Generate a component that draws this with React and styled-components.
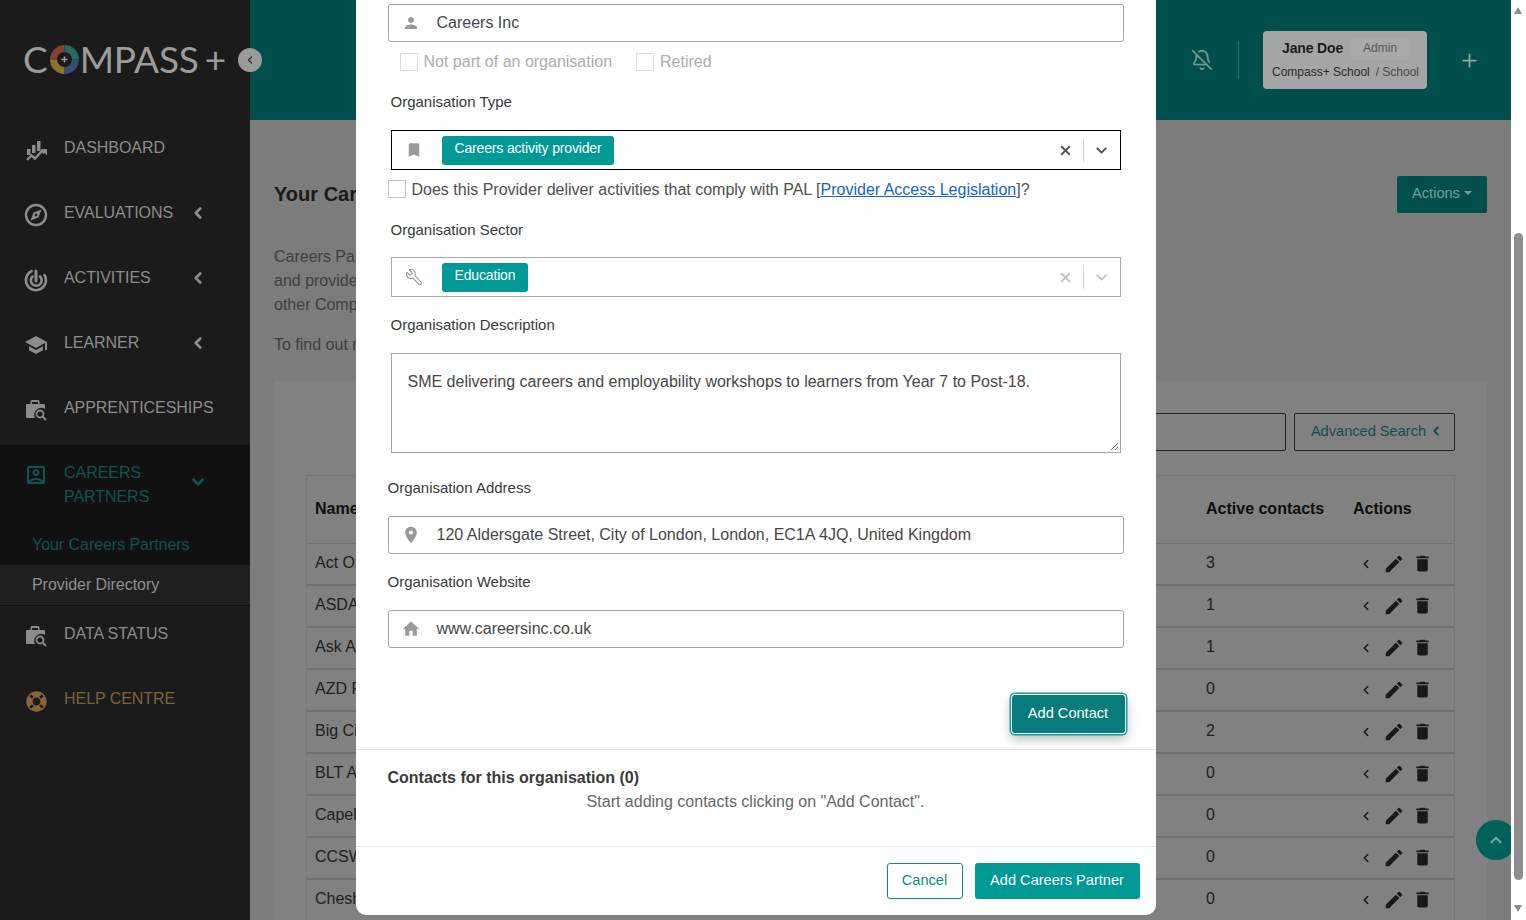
import React from "react";
import styled, { createGlobalStyle } from "styled-components";
import { MdPerson, MdBookmark, MdLocationOn, MdHome, MdEdit, MdDelete, MdSchool, MdOutlineAccountBox } from "react-icons/md";
import { FaLifeRing } from "react-icons/fa";
import { ChevronLeft, ChevronDown, ChevronUp, X, BellOff, Plus, Wrench } from "lucide-react";

const Global = createGlobalStyle`
  html, body { margin: 0; padding: 0; height: 100%; overflow: hidden; background: #fff; }
  body { font-family: "Liberation Sans", Arial, sans-serif; font-size: 16px; }
  * { box-sizing: border-box; }
  #root { height: 100%; }
`;

const Screen = styled.div`display: flex; width: 1526px; height: 920px; overflow: hidden;`;
const Frame = styled.div`position: relative; display: flex; width: 1511px; height: 920px; overflow: hidden;`;

/* Sidebar */
const Sidebar = styled.aside`width: 250px; flex: none; background: #1b1b1b; display: flex; flex-direction: column;`;
const LogoBar = styled.div`height: 115px; padding: 39px 0 0 23px; display: flex; align-items: flex-start;`;
const LogoText = styled.span`font-family: Lato, sans-serif; font-size: 37px; line-height: 40px; letter-spacing: ${p => p.$ls || "-0.2px"}; color: #9b9b9b; font-weight: 400;`;
const LogoRing = styled.svg`width: 29px; height: 29px; margin: 6px 1px 0 2px; flex: none;`;
const LogoPlus = styled(LogoText)`margin-left: 6px;`;
const NavItem = styled.div`
  height: 65px; display: flex; align-items: flex-start;
  padding: 21px 0 0 24px;
  margin-top: ${p => (p.$tight ? "-5px" : "0")};
  color: ${p => p.$color || "#8c8c8c"};
`;
const NavIcon = styled.span`width: 24px; height: 24px; margin: 2px 16px 0 0; display: flex; align-items: center; justify-content: center; flex: none; color: ${p => p.$color || "#8c8c8c"};`;
const NavLabel = styled.span`font-size: 16px; line-height: 24px; letter-spacing: -0.05px; width: 125px; white-space: pre-line; flex: none;`;
const NavChevron = styled.span`margin: ${p => p.$mt || "3px"} 0 0 0; display: flex; color: ${p => p.$color || "#8c8c8c"};`;
const NavGroup = styled.div`margin-top: 5px; background: #111;`;
const GroupHead = styled.div`height: 78px; padding: 16px 0 0 24px; display: flex; align-items: flex-start; color: #0f5352;`;
const SubActive = styled.div`height: 42px; padding: 10px 0 0 32px; font-size: 16px; line-height: 24px; color: #0f5352; letter-spacing: -0.05px;`;
const SubItem = styled.div`height: 41px; padding: 8px 0 0 32px; font-size: 16px; line-height: 24px; color: #8e8e8e; background: #1f1f1f; border-bottom: 1px solid #0d0d0d; letter-spacing: -0.05px;`;

/* Main page */
const Main = styled.main`flex: 1; background: #7c7c7c; display: flex; flex-direction: column; min-width: 0;`;
const Header = styled.header`height: 120px; flex: none; background: #004f4c; display: flex; align-items: center; justify-content: flex-end; padding-right: 31px;`;
const HeaderIcon = styled.span`display: flex; color: #6d9391;`;
const HeaderRule = styled.span`width: 1px; height: 38px; background: #2f6d6a; margin: 0 24px 0 25px;`;
const UserCard = styled.div`width: 164px; height: 58px; background: #a5a5a5; border-radius: 4px; padding: 6px 8px 0 9px; color: #222; margin-right: 32px;`;
const UserTop = styled.div`display: flex; align-items: center; padding-left: 10px; height: 23px;`;
const UserName = styled.span`font-size: 14px; font-weight: 700; color: #1c1c1c; letter-spacing: -0.15px; padding-bottom: 1px;`;
const UserBadge = styled.span`margin-left: 8px; width: 58px; height: 23px; background: #a9a9a9; border-radius: 3px; font-size: 12px; line-height: 23px; text-align: center; color: #555;`;
const UserBottom = styled.div`display: flex; justify-content: space-between; font-size: 12px; line-height: 16px; margin-top: 4px; color: #2b2b2b;`;
const UserRole = styled.span`color: #484848;`;

const Content = styled.div`flex: 1; padding: 56px 24px 0; min-height: 0; display: flex; flex-direction: column;`;
const TitleRow = styled.div`display: flex; justify-content: space-between; align-items: flex-start; height: 37px;`;
const Title = styled.h1`margin: 6px 0 0; font-size: 20px; line-height: 24px; font-weight: 700; color: #1a1a1a;`;
const ActionsBtn = styled.button`width: 90px; height: 37px; border: 0; border-radius: 2px; background: #004f4c; color: #6f9f9d; font: 14.6px "Liberation Sans", sans-serif; display: flex; align-items: center; justify-content: center; gap: 4px; padding: 0 0 3px;`;
const Caret = styled.span`width: 0; height: 0; border: 4px solid transparent; border-top-color: #6f9f9d; border-bottom: 0;`;
const Para = styled.p`margin: ${p => p.$mt} 0 0; font-size: 16px; line-height: 24px; color: #3f3f3f; white-space: pre-line; width: 600px;`;
const Card = styled.section`margin-top: 24px; flex: 1; background: #818181; padding: 32px 32px 0;`;
const SearchRow = styled.div`display: flex; justify-content: flex-end; gap: 8px;`;
const SearchInput = styled.div`width: 800px; height: 38px; border: 1px solid #232323; border-radius: 2px;`;
const AdvBtn = styled.button`width: 161px; height: 38px; border: 1px solid #232323; border-radius: 2px; background: transparent; color: #124f4f; font: 14.6px "Liberation Sans", sans-serif; display: flex; align-items: center; justify-content: center; gap: 3px; padding: 0 0 2px 5px;`;
const Table = styled.div`margin-top: 24px; border: 1px solid #767676; border-bottom: 0;`;
const Row = styled.div`
  display: grid; grid-template-columns: 891px 147px 1fr; align-items: center;
  height: ${p => (p.$head ? "68px" : "42px")};
  padding-left: 8px; border-bottom: 2px solid #6f6f6f; color: #202020;
  ${p => p.$head && "font-weight: 700; color: #0e0e0e; border-bottom: 1px solid #727272; padding-bottom: 2px;"}
`;
const Cell = styled.div`padding-bottom: ${p => (p.$head ? "0" : "3px")}; white-space: nowrap; overflow: hidden;`;
const RowActions = styled.div`display: flex; align-items: center; gap: 7px; padding: 0 0 1px 7px; margin-left: -1px; color: #191919;`;
const RowChevron = styled.span`display: flex; margin-right: 3px;`;
const BackTop = styled.div`position: absolute; left: 1476px; top: 820px; width: 40px; height: 40px; border-radius: 50%; background: #00605c; color: #6fa3a1; display: flex; align-items: center; justify-content: center;`;
const Toggle = styled.div`position: absolute; left: 238px; top: 48px; width: 24px; height: 24px; border-radius: 50%; background: #9a9a9a; color: #333; display: flex; align-items: center; justify-content: center;`;

/* Modal */
const Overlay = styled.div`position: absolute; inset: 0; display: flex; justify-content: center; align-items: flex-start;`;
const Modal = styled.div`width: 800px; height: 915px; background: #fff; border-radius: 0 0 10px 10px; display: flex; flex-direction: column;`;
const Form = styled.div`padding: 4px 32px 0;`;
const InputBox = styled.div`height: 38px; margin-top: ${p => p.$mt || 0}; border: 1px solid #a6a6a6; border-radius: 3px; display: flex; align-items: center; color: #474747;`;
const FieldIcon = styled.span`width: 47px; margin-right: 1px; flex: none; display: flex; justify-content: center; color: #9a9a9a; padding-right: 3px;`;
const CheckRow = styled.div`margin-top: 10px; padding-left: 12px; display: flex; align-items: center; height: 19px; color: #adadad;`;
const CheckBox = styled.span`width: 18px; height: 18px; flex: none; border: 1px solid ${p => p.$c || "#dcdcdc"}; margin-right: ${p => p.$mr || "6px"}; margin-left: ${p => p.$ml || 0};`;
const Label = styled.div`margin-top: ${p => p.$mt}; padding-left: ${p => (p.$flush ? "0" : "3px")}; font-size: 15px; line-height: 20px; color: #3a3a3a;`;
const SelectBox = styled.div`
  margin: ${p => p.$mt} 3px 0; height: 40px; display: flex; align-items: center;
  border: 1px solid ${p => (p.$focus ? "#000" : "#a9a9a9")};
`;
const SelectIcon = styled(FieldIcon)`width: 44px; margin: 0; padding: 0; flex: none;`;
const Chip = styled.span`margin-left: 6px; height: 29px; padding: 0 13px 4px; background: #009a96; border-radius: 3px; color: #fff; font-size: 14px; letter-spacing: -0.16px; display: flex; align-items: center;`;
const SelectTools = styled.div`margin-left: auto; display: flex; align-items: center; color: ${p => p.$c}; padding-right: 10px;`;
const ToolRule = styled.span`width: 1px; height: 24px; background: #d4d4d4; margin: 0 9px 0 10px;`;
const PalRow = styled.div`margin-top: 10px; height: 18px; display: flex; align-items: center; color: #4f4f4f; line-height: 20px;`;
const PalText = styled.span`padding-top: 1px; white-space: nowrap;`;
const Link = styled.a`color: #1268c4; text-decoration: underline;`;
const TextArea = styled.div`margin: 18px 3px 0; height: 100px; border: 1px solid #a6a6a6; padding: 16px 15px 0 16px; line-height: 24px; color: #474747; position: relative;`;
const Resize = styled.svg`position: absolute; right: 1px; bottom: 1px; width: 10px; height: 10px;`;
const AddRow = styled.div`margin-top: 47px; display: flex; justify-content: flex-end;`;
const AddBtn = styled.button`
  width: 113px; height: 38px; margin-right: -1px; border: 0; border-radius: 3px; background: #067c7b; color: #fff;
  font: 14.6px "Liberation Sans", sans-serif; padding: 0 0 3px;
  box-shadow: 0 0 0 1px #fff, 0 0 0 2.5px #1d9b9b, 0 5px 12px 1px rgba(0,0,0,.28);
`;
const Section = styled.div`margin-top: 16px; border-top: 1px solid #e3e3e3; padding: 18px 32px 34px;`;
const SectionTitle = styled.div`font-weight: 700; line-height: 20px; color: #3a3a3a;`;
const SectionNote = styled.div`margin-top: 4px; line-height: 20px; text-align: center; color: #666;`;
const Footer = styled.div`border-top: 1px solid #e3e3e3; padding: 16px; display: flex; justify-content: flex-end; gap: 12px;`;
const Cancel = styled.button`width: 76px; height: 36px; border: 1px solid #0a8d8a; border-radius: 3px; background: #fff; color: #0a8d8a; font: 14.6px "Liberation Sans", sans-serif; padding: 0 0 3px;`;
const Primary = styled.button`width: 165px; height: 36px; border: 0; border-radius: 3px; background: #009a96; color: #fff; font: 14.6px "Liberation Sans", sans-serif; padding: 0 0 3px;`;

/* Native scrollbar look */
const ScrollBar = styled.div`width: 15px; flex: none; background: #fff; position: relative; display: flex; flex-direction: column; align-items: center;`;
const Thumb = styled.div`margin: 219px 0 0 -1px; width: 9px; height: 647px; border-radius: 5px; background: #8f8f8f;`;
const Arrow = styled.span`
  width: 0; height: 0; margin: ${p => p.$m}; margin-left: -1px; border-left: 4.5px solid transparent; border-right: 4.5px solid transparent;
  ${p => (p.$up ? "border-bottom: 7px solid #8a8a8a;" : "border-top: 7px solid #8a8a8a;")}
`;

const DashIcon = () => (
  <svg width="24" height="24" viewBox="0 0 24 24" fill="currentColor">
    <rect x="3" y="11" width="3.500" height="6" /><rect x="8" y="7" width="3.500" height="8" /><rect x="13" y="3" width="3.500" height="10" />
    <path d="M3 22l4.500-4.500 3.500 3 7-7.500 2.500 2" fill="none" stroke="currentColor" strokeWidth="2.400" />
    <path d="M23 17.500V11h-6z" />
  </svg>
);
const CompassIcon = () => (
  <svg width="24" height="24" viewBox="0 0 24 24" fill="none" stroke="currentColor">
    <circle cx="12" cy="12" r="10" strokeWidth="2.400" />
    <path d="M17.500 6.500L14.500 14.500 6.500 17.500 9.500 9.500z" fill="currentColor" stroke="none" />
    <circle cx="12" cy="12" r="1.300" fill="#1b1b1b" stroke="none" />
  </svg>
);
const RadarIcon = () => (
  <svg width="24" height="24" viewBox="0 0 24 24" fill="none" stroke="currentColor" strokeWidth="2.600" strokeLinecap="round">
    <path d="M7.500 3.200A10 10 0 1 0 20.500 7" /><path d="M8.500 8.500a5.400 5.400 0 1 0 7.500 0" /><path d="M12 3v10" strokeWidth="3" />
  </svg>
);
const CaseSearch = () => (
  <svg width="24" height="24" viewBox="0 0 24 24" fill="currentColor">
    <path d="M8 2h6a1.500 1.500 0 0 1 1.500 1.500V6H20a1 1 0 0 1 1 1v4a7 7 0 0 0-10 9H3a1 1 0 0 1-1-1V7a1 1 0 0 1 1-1h3.500V3.500A1.500 1.500 0 0 1 8 2zm0 2v2h6V4z" fillRule="evenodd" />
    <circle cx="16" cy="16" r="3.500" fill="none" stroke="currentColor" strokeWidth="1.800" />
    <path d="M18.500 18.500l3.500 3.500" stroke="currentColor" strokeWidth="2" />
  </svg>
);
const Ring = () => (
  <LogoRing viewBox="0 0 28 28">
    <g fill="none" strokeWidth="7">
      <path d="M14 3.500A10.500 10.500 0 0 0 3.500 14" stroke="#84403a" />
      <path d="M3.500 14A10.500 10.500 0 0 0 14 24.500" stroke="#8a742e" />
      <path d="M14 24.500A10.500 10.500 0 0 0 24.500 14" stroke="#324f76" />
      <path d="M24.500 14A10.500 10.500 0 0 0 14 3.500" stroke="#256b64" />
    </g>
    <circle cx="14" cy="14" r="7" fill="#1b1b1b" />
    <path d="M14 11v6M11 14h6" stroke="#9b9b9b" strokeWidth="1.500" />
  </LogoRing>
);

const chev = <ChevronLeft size={18} strokeWidth={3.6} />;
const rows = [["Act On It", 3], ["ASDA", 1], ["Ask Apprenticeships", 1], ["AZD Partnership", 0], ["Big City", 2], ["BLT Academy", 0], ["Capel Manor", 0], ["CCSW Trust", 0], ["Cheshire Careers", 0]];

export default function App() {
  return (
    <Screen>
      <Global />
      <Frame>
        <Sidebar>
          <LogoBar>
            <LogoText $ls="0">C</LogoText>
            <Ring />
            <LogoText>MPASS</LogoText>
            <LogoPlus>+</LogoPlus>
          </LogoBar>
          <NavItem><NavIcon><DashIcon /></NavIcon><NavLabel>DASHBOARD</NavLabel></NavItem>
          <NavItem><NavIcon><CompassIcon /></NavIcon><NavLabel>EVALUATIONS</NavLabel><NavChevron>{chev}</NavChevron></NavItem>
          <NavItem><NavIcon><RadarIcon /></NavIcon><NavLabel>ACTIVITIES</NavLabel><NavChevron>{chev}</NavChevron></NavItem>
          <NavItem><NavIcon><MdSchool size={26} /></NavIcon><NavLabel>LEARNER</NavLabel><NavChevron>{chev}</NavChevron></NavItem>
          <NavItem><NavIcon><CaseSearch /></NavIcon><NavLabel>APPRENTICESHIPS</NavLabel></NavItem>
          <NavGroup>
            <GroupHead>
              <NavIcon $color="#0f5352"><MdOutlineAccountBox size={24} /></NavIcon>
              <NavLabel>{"CAREERS\nPARTNERS"}</NavLabel>
              <NavChevron $color="#0f5352" $mt="12px"><ChevronDown size={18} strokeWidth={3.6} /></NavChevron>
            </GroupHead>
            <SubActive>Your Careers Partners</SubActive>
            <SubItem>Provider Directory</SubItem>
          </NavGroup>
          <NavItem $tight><NavIcon><CaseSearch /></NavIcon><NavLabel>DATA STATUS</NavLabel></NavItem>
          <NavItem $color="#7d6238"><NavIcon $color="#87653a"><FaLifeRing size={21} /></NavIcon><NavLabel>HELP CENTRE</NavLabel></NavItem>
        </Sidebar>
        <Main>
          <Header>
            <HeaderIcon><BellOff size={22} strokeWidth={2} /></HeaderIcon>
            <HeaderRule />
            <UserCard>
              <UserTop><UserName>Jane Doe</UserName><UserBadge>Admin</UserBadge></UserTop>
              <UserBottom><span>Compass+ School</span><UserRole>/ School</UserRole></UserBottom>
            </UserCard>
            <HeaderIcon><Plus size={21} strokeWidth={2} color="#8fa9a8" /></HeaderIcon>
          </Header>
          <Content>
            <TitleRow><Title>Your Careers Partners</Title><ActionsBtn>Actions <Caret /></ActionsBtn></TitleRow>
            <Para $mt="32px">{"Careers Partners are employers\nand providers you work with,\nother Compass+ schools"}</Para>
            <Para $mt="16px">To find out more</Para>
            <Card>
              <SearchRow><SearchInput /><AdvBtn>Advanced Search <ChevronLeft size={14} strokeWidth={3.2} /></AdvBtn></SearchRow>
              <Table>
                <Row $head><Cell $head>Name</Cell><Cell $head>Active contacts</Cell><Cell $head>Actions</Cell></Row>
                {rows.map(([name, n]) => (
                  <Row key={name}>
                    <Cell>{name}</Cell><Cell>{n}</Cell>
                    <RowActions><RowChevron><ChevronLeft size={14} strokeWidth={2.6} /></RowChevron><MdEdit size={22} /><MdDelete size={21} /></RowActions>
                  </Row>
                ))}
              </Table>
            </Card>
          </Content>
        </Main>
        <Toggle><ChevronLeft size={12} strokeWidth={3} /></Toggle>
        <BackTop><ChevronUp size={18} strokeWidth={3} /></BackTop>
        <Overlay>
          <Modal>
            <Form>
              <InputBox><FieldIcon><MdPerson size={18} /></FieldIcon>Careers Inc</InputBox>
              <CheckRow><CheckBox />Not part of an organisation<CheckBox $ml="24px" $mr="6px" />Retired</CheckRow>
              <Label $mt="21px">Organisation Type</Label>
              <SelectBox $focus $mt="18px">
                <SelectIcon><MdBookmark size={18} /></SelectIcon>
                <Chip>Careers activity provider</Chip>
                <SelectTools $c="#555"><X size={15} strokeWidth={3.2} /><ToolRule /><ChevronDown size={17} strokeWidth={2.8} /></SelectTools>
              </SelectBox>
              <PalRow><CheckBox $c="#c4c4c4" /><PalText>Does this Provider deliver activities that comply with PAL [<Link>Provider Access Legislation</Link>]?</PalText></PalRow>
              <Label $mt="22px">Organisation Sector</Label>
              <SelectBox $mt="17px">
                <SelectIcon><Wrench size={18} strokeWidth={1.5} style={{ transform: "scaleX(-1)" }} /></SelectIcon>
                <Chip>Education</Chip>
                <SelectTools $c="#c2c2c2"><X size={15} strokeWidth={3.2} /><ToolRule /><ChevronDown size={17} strokeWidth={2.8} /></SelectTools>
              </SelectBox>
              <Label $mt="18px">Organisation Description</Label>
              <TextArea>
                SME delivering careers and employability workshops to learners from Year 7 to Post-18.
                <Resize viewBox="0 0 10 10"><path d="M9 2L2 9M9 6L6 9" stroke="#777" strokeWidth="1" /></Resize>
              </TextArea>
              <Label $flush $mt="25px">Organisation Address</Label>
              <InputBox $mt="18px"><FieldIcon><MdLocationOn size={20} /></FieldIcon>120 Aldersgate Street, City of London, London, EC1A 4JQ, United Kingdom</InputBox>
              <Label $flush $mt="18px">Organisation Website</Label>
              <InputBox $mt="18px"><FieldIcon><MdHome size={20} /></FieldIcon>www.careersinc.co.uk</InputBox>
              <AddRow><AddBtn>Add Contact</AddBtn></AddRow>
            </Form>
            <Section>
              <SectionTitle>Contacts for this organisation (0)</SectionTitle>
              <SectionNote>Start adding contacts clicking on "Add Contact".</SectionNote>
            </Section>
            <Footer><Cancel>Cancel</Cancel><Primary>Add Careers Partner</Primary></Footer>
          </Modal>
        </Overlay>
      </Frame>
      <ScrollBar>
        <Arrow $up $m="7px 0 0" />
        <Thumb />
        <Arrow $m="25px 0 0" />
      </ScrollBar>
    </Screen>
  );
}
